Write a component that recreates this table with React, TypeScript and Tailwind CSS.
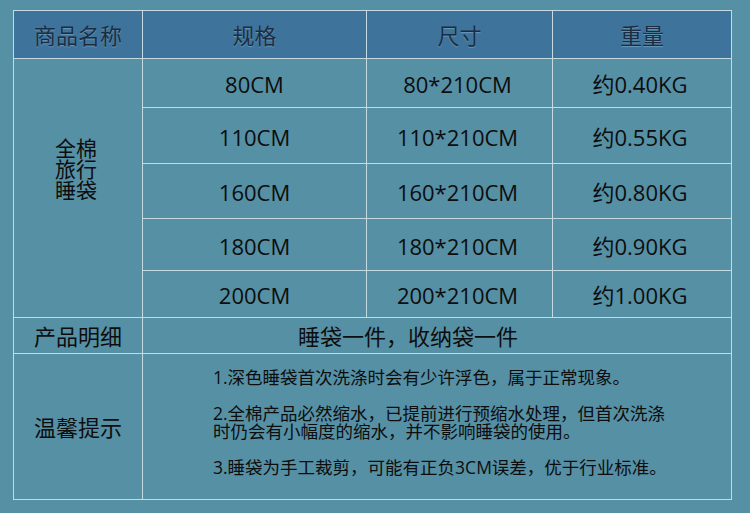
import React from 'react';

const rows = [
  { spec: '80CM', size: '80*210CM', weight: '约0.40KG', h: 'h-[49px]' },
  { spec: '110CM', size: '110*210CM', weight: '约0.55KG', h: 'h-[56px]' },
  { spec: '160CM', size: '160*210CM', weight: '约0.80KG', h: 'h-[55px]' },
  { spec: '180CM', size: '180*210CM', weight: '约0.90KG', h: 'h-[52px]' },
  { spec: '200CM', size: '200*210CM', weight: '约1.00KG', h: 'h-[47px]' },
];

const cell = 'border border-[#c4dbe4] text-center align-middle';

const App: React.FC = () => {
  return (
    <div
      className="w-[750px] h-[513px] bg-[#5690a5] pt-[10px] pl-[13px] text-[#0d0d0d] overflow-hidden"
      style={{ fontFamily: '"Open Sans", "Noto Sans CJK SC", sans-serif' }}
    >
      <table className="w-[718px] table-fixed border-collapse text-[22px] leading-none">
        <colgroup>
          <col className="w-[129px]" />
          <col className="w-[224px]" />
          <col className="w-[186px]" />
          <col className="w-[179px]" />
        </colgroup>
        <thead>
          <tr className="h-[48px] bg-[#3e739b] text-[#1a2d42] [text-shadow:0_1px_1px_rgba(160,200,220,0.45)]">
            <th className={`${cell} font-normal text-[22px]`}>商品名称</th>
            <th className={`${cell} font-normal text-[22px]`}>规格</th>
            <th className={`${cell} font-normal text-[22px]`}>尺寸</th>
            <th className={`${cell} font-normal text-[22px]`}>重量</th>
          </tr>
        </thead>
        <tbody>
          {rows.map((r, i) => (
            <tr key={r.spec} className={r.h}>
              {i === 0 && (
                <td rowSpan={5} className={`${cell} pb-[38px] pr-[4px]`}>
                  <div className="text-[21px] leading-[21px]">
                    全棉
                    <br />
                    旅行
                    <br />
                    睡袋
                  </div>
                </td>
              )}
              <td className={`${cell} pt-[2px]`}>{r.spec}</td>
              <td className={`${cell} pt-[2px] pr-[4px]`}>{r.size}</td>
              <td className={`${cell} pt-[2px] pr-[4px]`}>{r.weight}</td>
            </tr>
          ))}
          <tr className="h-[36px]">
            <td className={cell}>产品明细</td>
            <td colSpan={3} className={`${cell} pr-[58px]`}>
              睡袋一件，收纳袋一件
            </td>
          </tr>
          <tr className="h-[146px]">
            <td className={cell}>温馨提示</td>
            <td colSpan={3} className="border border-[#c4dbe4] align-top pl-[70px] pt-[14px] text-left text-[17.5px] leading-[18px]">
              <p className="mb-[18px]">1.深色睡袋首次洗涤时会有少许浮色，属于正常现象。</p>
              <p className="mb-[18px]">
                2.全棉产品必然缩水，已提前进行预缩水处理，但首次洗涤
                <br />
                时仍会有小幅度的缩水，并不影响睡袋的使用。
              </p>
              <p>3.睡袋为手工裁剪，可能有正负3CM误差，优于行业标准。</p>
            </td>
          </tr>
        </tbody>
      </table>
    </div>
  );
};

export default App;
